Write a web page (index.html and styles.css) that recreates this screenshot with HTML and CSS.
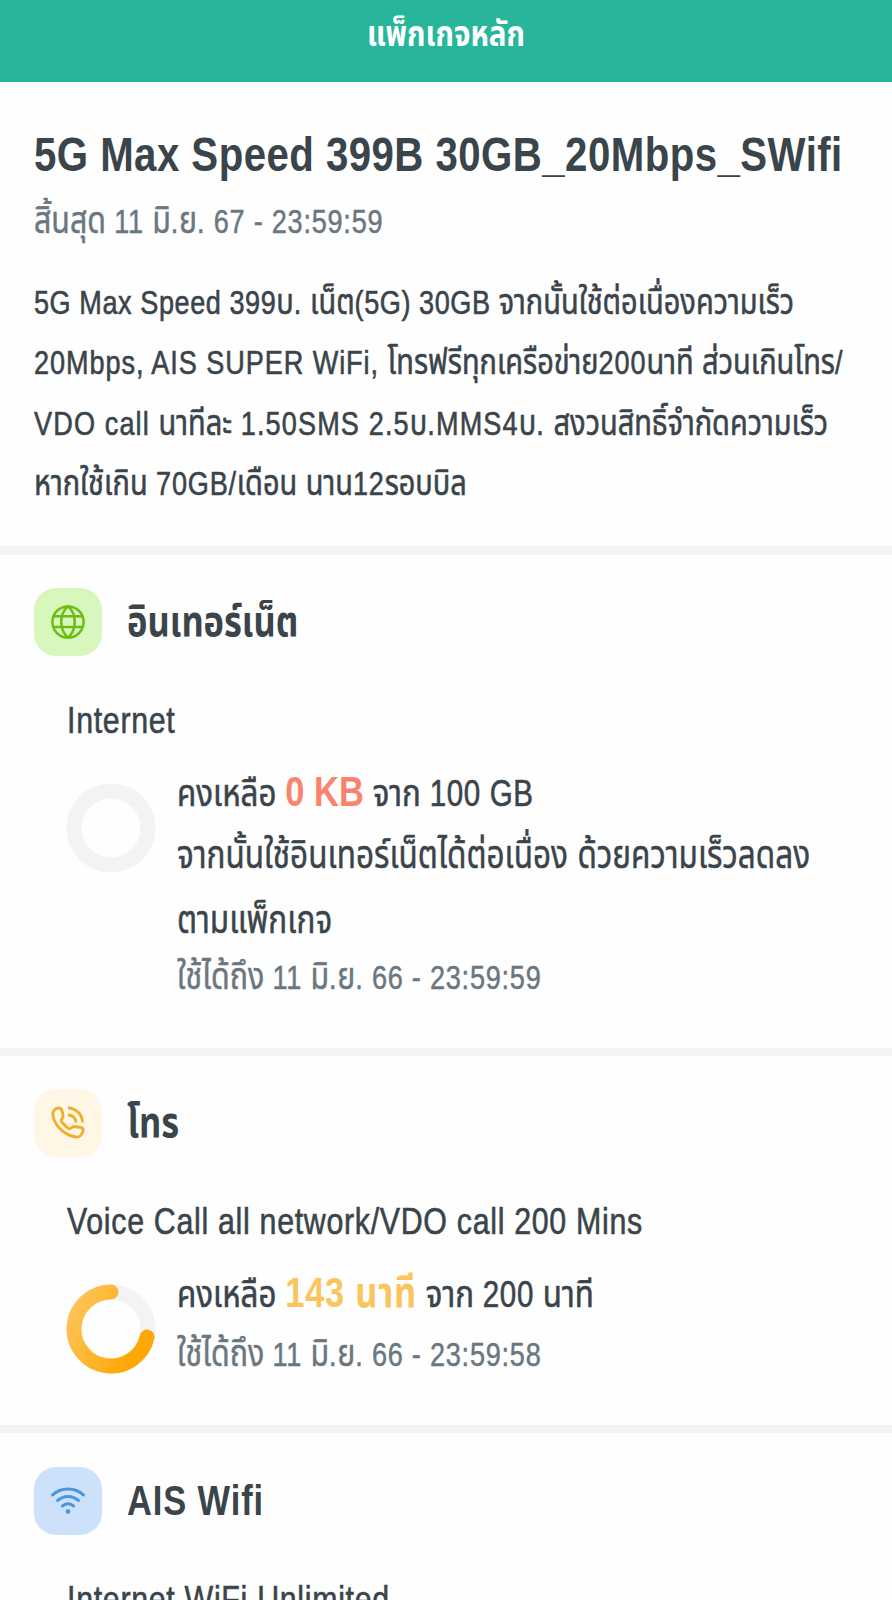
FILE: index.html
```html
<!DOCTYPE html>
<html lang="th">
<head>
    <meta charset="UTF-8">
    <title>แพ็กเกจหลัก</title>
    <link rel="stylesheet" href="styles.css">
</head>
<body>
    <header class="topbar"><div class="title">แพ็กเกจหลัก</div></header>

    <section class="summary">
        <h1 class="narrow">5G Max Speed 399B 30GB_20Mbps_SWifi</h1>
        <p class="date narrow"><i>สิ้นสุด</i> 11 <i>มิ</i>.<i>ย</i>. 67 - 23:59:59</p>
        <p class="detail">
            <span class="line narrow">5G Max Speed 399<i>บ</i>. <i>เน็ต</i>(5G) 30GB <i>จากนั้นใช้ต่อเนื่องความเร็ว</i></span>
            <span class="line narrow">20Mbps, AIS SUPER WiFi, <i>โทรฟรีทุกเครือข่าย</i>200<i>นาที</i> <i>ส่วนเกินโทร</i>/</span>
            <span class="line narrow">VDO call <i>นาทีละ</i> 1.50SMS 2.5<i>บ</i>.MMS4<i>บ</i>. <i>สงวนสิทธิ์จำกัดความเร็ว</i></span>
            <span class="line narrow"><i>หากใช้เกิน</i> 70GB/<i>เดือน</i> <i>นาน</i>12<i>รอบบิล</i></span>
        </p>
    </section>

    <section class="package internet">
        <div class="heading">
            <div class="icon green">
                <svg width="36" height="36" viewBox="0 0 36 36" fill="none" stroke="#6cbd12" stroke-width="2.5">
                    <circle cx="18" cy="18" r="15.6"/>
                    <path d="M18 2.400C9 10 9 26 18 33.600C27 26 27 10 18 2.400Z"/>
                    <path d="M4 12.2h28M4 23h28"/>
                </svg>
            </div>
            <h2 class="narrow">อินเทอร์เน็ต</h2>
        </div>
        <h3 class="narrow">Internet</h3>
        <div class="usage">
            <svg class="ring" width="90" height="90" viewBox="0 0 90 90" fill="none" stroke-width="15">
                <circle cx="45" cy="45" r="37" stroke="#f2f3f5"/>
            </svg>
            <div class="info">
                <p class="remain narrow"><i>คงเหลือ</i> <b class="red">0 KB</b> <i>จาก</i> 100 GB</p>
                <p class="note">
                    <span class="line narrow"><i>จากนั้นใช้อินเทอร์เน็ตได้ต่อเนื่อง</i> <i>ด้วยความเร็วลดลง</i></span>
                    <span class="line narrow"><i>ตามแพ็กเกจ</i></span>
                </p>
                <p class="date narrow"><i>ใช้ได้ถึง</i> 11 <i>มิ</i>.<i>ย</i>. 66 - 23:59:59</p>
            </div>
        </div>
    </section>

    <section class="package call">
        <div class="heading">
            <div class="icon yellow">
                <svg width="36" height="36" viewBox="0 0 36 36" fill="none" stroke="#edb02d" stroke-width="2.9" stroke-linejoin="round">
                    <path d="M4 5.500C6 2.500 10.500 2 12 5.500L13 10.500C13.500 13 10.500 14 11.500 16.500C13.500 19 15.500 21.500 18.500 23.500C21 25 21.500 21.500 24 21.500L31 22.500C33 23 33.500 24 33 26C32 30 29 32.500 26 32C14 30 3.500 20 2.800 9C2.800 7.500 3.200 6.500 4 5.500Z"/>
                    <path d="M18 3C26 3 32.500 9.500 32.500 17.500M18 10C22.500 10 26 13 26 17.500"/>
                </svg>
            </div>
            <h2 class="narrow">โทร</h2>
        </div>
        <h3 class="narrow">Voice Call all network/VDO call 200 Mins</h3>
        <div class="usage">
            <svg class="ring" width="90" height="90" viewBox="0 0 90 90" fill="none" stroke-width="15">
                <defs>
                    <linearGradient id="amber" x1="0" y1="0" x2="1" y2="0.5">
                        <stop offset="0.1" stop-color="#fec253"/>
                        <stop offset="1" stop-color="#fea705"/>
                    </linearGradient>
                </defs>
                <circle cx="45" cy="45" r="37" stroke="#f2f3f5"/>
                <path d="M45 8A37 37 0 1 0 81.100 53" stroke="url(#amber)" stroke-linecap="round"/>
            </svg>
            <div class="info">
                <p class="remain narrow"><i>คงเหลือ</i> <b class="amber">143 นาที</b> <i>จาก</i> 200 <i>นาที</i></p>
                <p class="date narrow"><i>ใช้ได้ถึง</i> 11 <i>มิ</i>.<i>ย</i>. 66 - 23:59:58</p>
            </div>
        </div>
    </section>

    <section class="package wifi">
        <div class="heading">
            <div class="icon blue">
                <svg width="36" height="36" viewBox="0 0 36 36" fill="none" stroke="#4a94dc" stroke-width="3" stroke-linecap="round">
                    <path d="M2.500 12C11 4 25 4 33.500 12M7.500 17.500C13.500 12 22.500 12 28.500 17.500M12.500 23C15.500 20 20.500 20 23.500 23"/>
                    <circle cx="18" cy="28.500" r="2.300" fill="#4a94dc" stroke="none"/>
                </svg>
            </div>
            <h2 class="narrow">AIS Wifi</h2>
        </div>
        <h3 class="narrow">Internet WiFi Unlimited</h3>
    </section>
</body>
</html>
```

FILE: styles.css
```css
* {
    box-sizing: border-box;
}

body {
    margin: 0;
    height: 1600px;
    overflow: hidden;
    background-color: #fefefe;
    color: #3a444b;
    font-family: "Liberation Sans", "Noto Sans Thai", "Noto Sans", sans-serif;
    font-size: 33px;
}

h1, h2, h3, p {
    margin: 0;
}

/* condensed text */
.narrow {
    transform: scaleX(0.82);
    transform-origin: left;
    white-space: nowrap;
}

/* thai words are set a bit larger than the latin ones */
i {
    font-style: normal;
    font-size: 1.12em;
    line-height: 0;
    letter-spacing: 0;
}

.topbar {
    height: 82px;
    background-color: #27b59b;
    color: white;
    font-size: 36px;
    font-weight: bold;
    text-align: center;
}

.title {
    line-height: 67px;
    transform: scaleX(0.82);
}

.summary {
    height: 473px;
    padding: 44px 34px 0;
    border-bottom: 9px solid #f2f3f4;
}

h1 {
    font-size: 49px;
    line-height: 56px;
    letter-spacing: 0.57px;
}

.date {
    color: #6a7780;
    font-size: 33px;
    line-height: 60px;
    letter-spacing: 0.95px;
    -webkit-text-stroke: 0.5px;
}

.summary .date {
    margin-top: 10px;
}

.detail {
    padding-top: 21px;
    letter-spacing: 1px;
    -webkit-text-stroke: 0.6px;
}

.detail i {
    font-size: 1.07em;
}

.line {
    display: block;
    line-height: 60.3px;
}

.detail .line:nth-child(1) {
    letter-spacing: 0.7px;
}

.detail .line:nth-child(2) {
    letter-spacing: 1.15px;
}

.detail .line:nth-child(3) {
    letter-spacing: 1.4px;
}

.package {
    padding: 33px 34px 0;
    border-bottom: 8px solid #f2f3f4;
}

.internet {
    height: 501px;
}

.call {
    height: 377px;
}

.wifi {
    padding-top: 34px;
}

.heading {
    display: flex;
    align-items: center;
    gap: 25px;
}

.icon {
    display: flex;
    align-items: center;
    justify-content: center;
    width: 68px;
    height: 68px;
    border-radius: 22px;
}

.green {
    background-color: #d8f7bc;
}

.yellow {
    background-color: #fff6e5;
}

.blue {
    background-color: #cde2fa;
}

h2 {
    font-size: 42px;
    line-height: 68px;
}

.wifi h2 {
    letter-spacing: 1.1px;
}

h3 {
    margin: 34px 0 0 33px;
    font-size: 37px;
    font-weight: normal;
    line-height: 61px;
    letter-spacing: 0.85px;
    -webkit-text-stroke: 0.6px;
}

.usage {
    display: flex;
    gap: 21px;
    padding: 13px 0 0 32px;
}

.ring {
    flex: none;
    margin-top: 19px;
}

.info {
    width: 650px;
}

.remain {
    font-size: 36px;
    line-height: 60px;
    letter-spacing: 0.8px;
    -webkit-text-stroke: 0.6px;
}

.remain i {
    font-size: 1.06em;
}

.remain b {
    font-size: 42px;
    line-height: 0;
    letter-spacing: 0;
    -webkit-text-stroke: 0;
}

.red {
    color: #fa836d;
}

.remain .amber {
    color: #fac55f;
    letter-spacing: 0.9px;
}

.note {
    -webkit-text-stroke: 0.5px;
}

.note .line {
    font-size: 34px;
    line-height: 64.5px;
    word-spacing: 2px;
}

.note i {
    font-size: 1.13em;
}

.note + .date {
    margin-top: -5px;
}
```
